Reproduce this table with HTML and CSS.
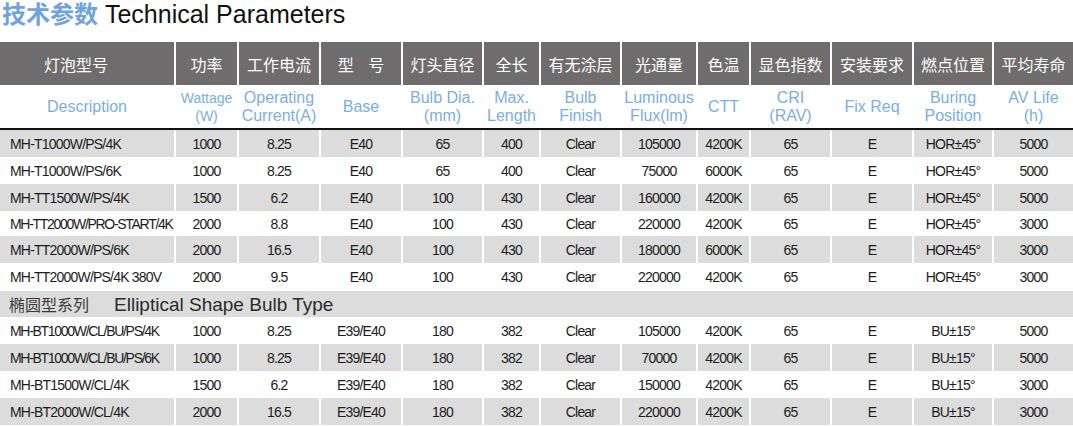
FILE: index.html
```html
<!DOCTYPE html>
<html lang="zh">
<head>
<meta charset="utf-8">
<title>技术参数 Technical Parameters</title>
<link rel="stylesheet" href="styles.css">
</head>
<body>
<h1 class="title"><span class="title-cn">技术参数</span> <span class="title-en">Technical Parameters</span></h1>
<table class="spec">
  <colgroup>
    <col style="width:175px"><col style="width:63px"><col style="width:82px"><col style="width:82px">
    <col style="width:81px"><col style="width:57px"><col style="width:81px"><col style="width:76px">
    <col style="width:53px"><col style="width:81px"><col style="width:82px"><col style="width:80px"><col style="width:80px">
  </colgroup>
  <thead>
    <tr class="head-cn">
      <th class="first-cn">灯泡型号</th><th>功率</th><th>工作电流</th><th>型&nbsp;&nbsp;&nbsp;&nbsp;号</th><th>灯头直径</th><th>全长</th><th>有无涂层</th><th>光通量</th><th>色温</th><th>显色指数</th><th>安装要求</th><th>燃点位置</th><th>平均寿命</th>
    </tr>
    <tr class="head-en">
      <th>Description</th><th class="small">Wattage<br>(W)</th><th>Operating<br>Current(A)</th><th>Base</th><th>Bulb Dia.<br>(mm)</th><th>Max.<br>Length</th><th>Bulb<br>Finish</th><th>Luminous<br>Flux(lm)</th><th>CTT</th><th>CRI<br>(RAV)</th><th>Fix Req</th><th>Buring<br>Position</th><th>AV Life<br>(h)</th>
    </tr>
  </thead>
  <tbody>
    <tr class="shade"><td>MH-T1000W/PS/4K</td><td>1000</td><td>8.25</td><td>E40</td><td>65</td><td>400</td><td>Clear</td><td>105000</td><td>4200K</td><td>65</td><td>E</td><td>HOR±45°</td><td>5000</td></tr>
    <tr><td>MH-T1000W/PS/6K</td><td>1000</td><td>8.25</td><td>E40</td><td>65</td><td>400</td><td>Clear</td><td>75000</td><td>6000K</td><td>65</td><td>E</td><td>HOR±45°</td><td>5000</td></tr>
    <tr class="shade"><td>MH-TT1500W/PS/4K</td><td>1500</td><td>6.2</td><td>E40</td><td>100</td><td>430</td><td>Clear</td><td>160000</td><td>4200K</td><td>65</td><td>E</td><td>HOR±45°</td><td>5000</td></tr>
    <tr class="short"><td class="tight">MH-TT2000W/PRO-START/4K</td><td>2000</td><td>8.8</td><td>E40</td><td>100</td><td>430</td><td>Clear</td><td>220000</td><td>4200K</td><td>65</td><td>E</td><td>HOR±45°</td><td>3000</td></tr>
    <tr class="shade"><td>MH-TT2000W/PS/6K</td><td>2000</td><td>16.5</td><td>E40</td><td>100</td><td>430</td><td>Clear</td><td>180000</td><td>6000K</td><td>65</td><td>E</td><td>HOR±45°</td><td>3000</td></tr>
    <tr class="tall"><td>MH-TT2000W/PS/4K 380V</td><td>2000</td><td>9.5</td><td>E40</td><td>100</td><td>430</td><td>Clear</td><td>220000</td><td>4200K</td><td>65</td><td>E</td><td>HOR±45°</td><td>3000</td></tr>
    <tr class="section"><td colspan="13"><span class="sec-cn">椭圆型系列</span><span class="sec-en">Elliptical Shape Bulb Type</span></td></tr>
    <tr><td class="tight">MH-BT1000W/CL/BU/PS/4K</td><td>1000</td><td>8.25</td><td>E39/E40</td><td>180</td><td>382</td><td>Clear</td><td>105000</td><td>4200K</td><td>65</td><td>E</td><td>BU±15°</td><td>5000</td></tr>
    <tr class="shade"><td class="tight">MH-BT1000W/CL/BU/PS/6K</td><td>1000</td><td>8.25</td><td>E39/E40</td><td>180</td><td>382</td><td>Clear</td><td>70000</td><td>4200K</td><td>65</td><td>E</td><td>BU±15°</td><td>5000</td></tr>
    <tr><td>MH-BT1500W/CL/4K</td><td>1500</td><td>6.2</td><td>E39/E40</td><td>180</td><td>382</td><td>Clear</td><td>150000</td><td>4200K</td><td>65</td><td>E</td><td>BU±15°</td><td>3000</td></tr>
    <tr class="shade"><td>MH-BT2000W/CL/4K</td><td>2000</td><td>16.5</td><td>E39/E40</td><td>180</td><td>382</td><td>Clear</td><td>220000</td><td>4200K</td><td>65</td><td>E</td><td>BU±15°</td><td>3000</td></tr>
  </tbody>
</table>
</body>
</html>
```
FILE: styles.css
```css
html, body {
  margin: 0;
  padding: 0;
  background: #fff;
}
body {
  font-family: "Liberation Sans", Arial, sans-serif;
  width: 1073px;
}
.title {
  margin: 0;
  padding: 0 0 0 2px;
  height: 42px;
  font-weight: normal;
  font-size: 25px;
  line-height: 26px;
  white-space: nowrap;
}
.title-cn {
  font-family: "Noto Sans CJK SC", sans-serif;
  font-weight: bold;
  color: #6ea3dc;
  font-size: 24px;
  line-height: 26px;
}
.title-en {
  color: #111;
  font-family: "Liberation Sans", Arial, sans-serif;
}
.spec {
  width: 1073px;
  border-collapse: collapse;
  table-layout: fixed;
}
.spec th, .spec td {
  padding: 0;
  border-left: 2px solid #fff;
  text-align: center;
  white-space: nowrap;
  overflow: hidden;
}
.spec th:first-child, .spec td:first-child {
  border-left: 0;
}
.head-cn th {
  height: 43px;
  background: #6e6c6c;
  color: #fff;
  font-family: "Noto Sans CJK SC", sans-serif;
  font-weight: normal;
  font-size: 16px;
}
.head-cn th.first-cn {
  padding-right: 22px;
}
.head-en th {
  height: 42px;
  color: #7aaee3;
  font-weight: normal;
  font-size: 16px;
  line-height: 18px;
  border-bottom: 2px solid #111;
  padding-top: 1px;
}
.head-en th.small {
  font-size: 14px;
  line-height: 18px;
}
.spec tbody td {
  height: 27px;
  font-family: "Liberation Sans", Arial, sans-serif;
  font-size: 14px;
  letter-spacing: -0.8px;
  color: #1c1c1c;
}
.spec tbody td:first-child {
  text-align: left;
  padding-left: 10px;
}
.spec tbody td.tight {
  letter-spacing: -1.3px;
}
.spec tbody tr.short td {
  height: 25px;
}
.spec tbody tr.tall td {
  height: 28px;
}
.spec tbody tr.shade td {
  background: #dcdcdc;
}
.spec tbody tr.section td {
  height: 26px;
  background: #dcdcdc;
  text-align: left;
  padding-left: 9px;
  letter-spacing: 0;
  color: #2b2b2b;
}
.sec-cn {
  font-family: "Noto Sans CJK SC", sans-serif;
  font-size: 16px;
  color: #3a3a3a;
  margin-right: 25px;
}
.sec-en {
  font-family: "Liberation Sans", Arial, sans-serif;
  font-size: 19px;
}
```
